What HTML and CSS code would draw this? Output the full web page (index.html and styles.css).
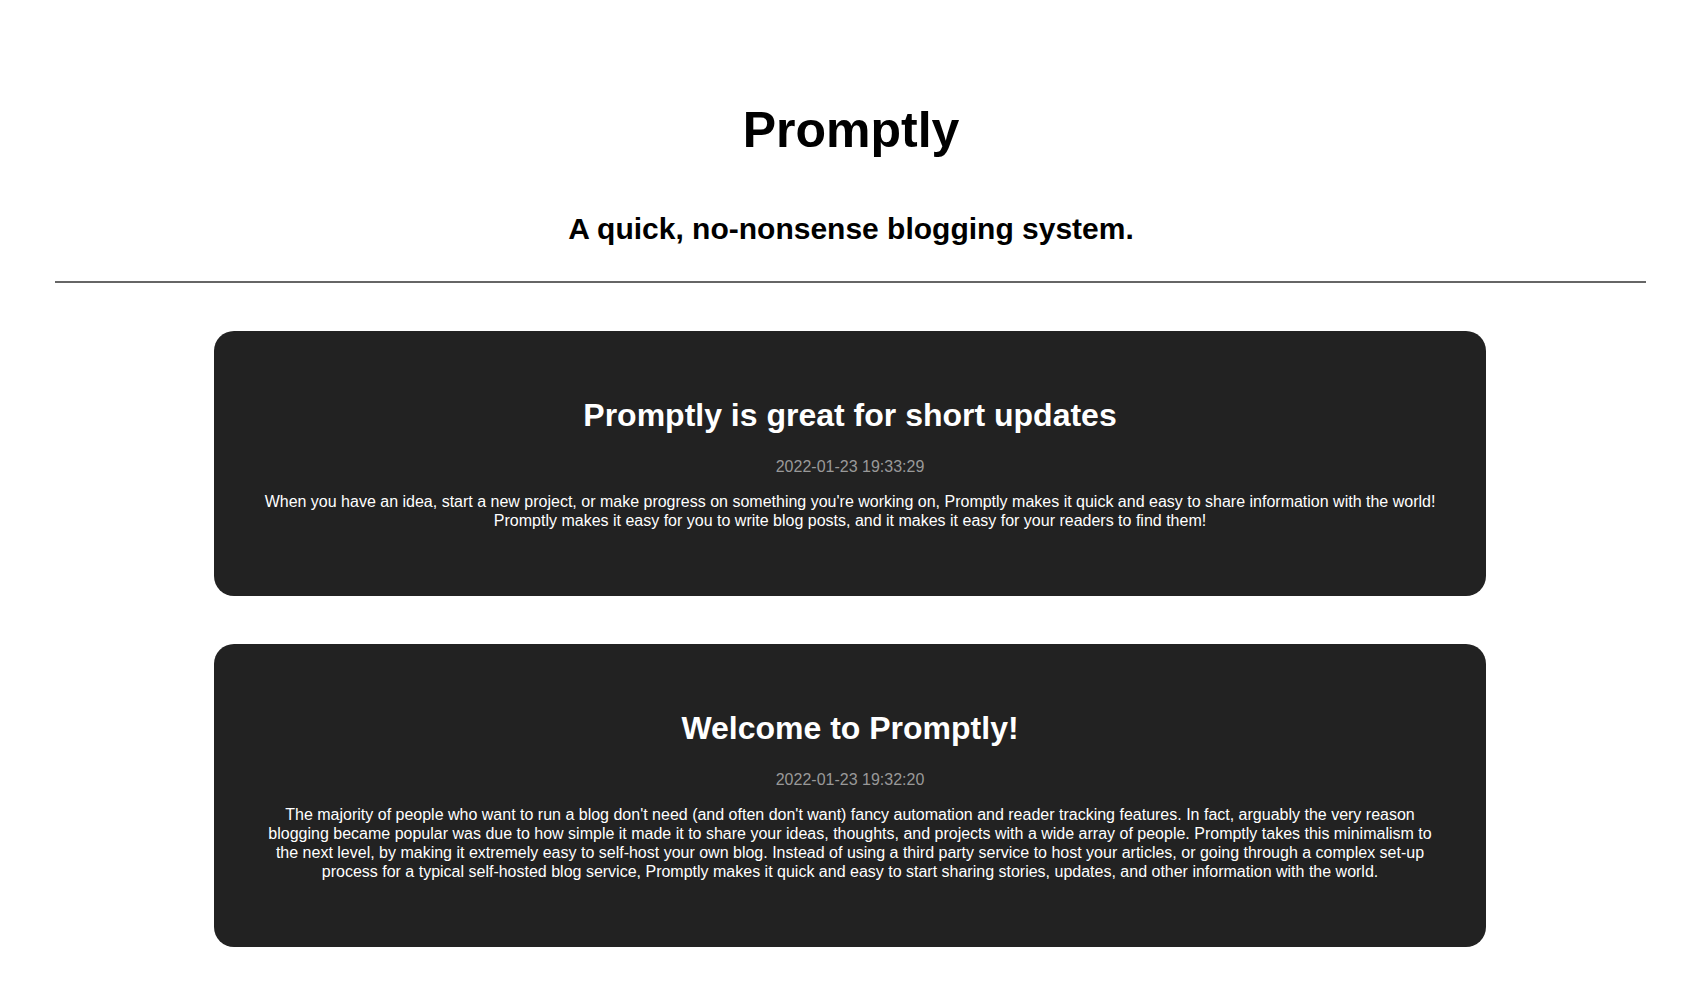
FILE: index.html
```html
<!DOCTYPE html>
<html lang="en">
<head>
<meta charset="utf-8">
<title>Promptly</title>
<link rel="stylesheet" href="styles.css">
</head>
<body>
<header class="site-header">
  <h1 class="site-title">Promptly</h1>
  <h2 class="site-tagline">A quick, no-nonsense blogging system.</h2>
</header>
<hr class="divider">
<main class="posts">
  <article class="post">
    <h2 class="post-title">Promptly is great for short updates</h2>
    <p class="post-date">2022-01-23 19:33:29</p>
    <p class="post-body">When you have an idea, start a new project, or make progress on something you're working on, Promptly makes it quick and easy to share information with the world! Promptly makes it easy for you to write blog posts, and it makes it easy for your readers to find them!</p>
  </article>
  <article class="post">
    <h2 class="post-title">Welcome to Promptly!</h2>
    <p class="post-date">2022-01-23 19:32:20</p>
    <p class="post-body">The majority of people who want to run a blog don't need (and often don't want) fancy automation and reader tracking features. In fact, arguably the very reason blogging became popular was due to how simple it made it to share your ideas, thoughts, and projects with a wide array of people. Promptly takes this minimalism to the next level, by making it extremely easy to self-host your own blog. Instead of using a third party service to host your articles, or going through a complex set-up process for a typical self-hosted blog service, Promptly makes it quick and easy to start sharing stories, updates, and other information with the world.</p>
  </article>
</main>
</body>
</html>
```

FILE: styles.css
```css
html, body {
  margin: 0;
  padding: 0;
  background: #fff;
}

body {
  font-family: "Liberation Sans", Arial, sans-serif;
  color: #000;
}

.site-header {
  text-align: center;
  padding-top: 102px;
}

.site-title {
  margin: 0;
  font-size: 50px;
  line-height: 56px;
  font-weight: bold;
}

.site-tagline {
  margin: 54px 0 0;
  font-size: 30px;
  line-height: 34px;
  font-weight: bold;
}

.divider {
  margin: 35px 56px 0 55px;
  border: 0;
  border-top: 2px solid #666;
  height: 0;
}

.posts {
  display: flex;
  flex-direction: column;
  align-items: center;
  gap: 48px;
  padding: 48px 2px 40px 0;
}

.post {
  width: 1272px;
  box-sizing: border-box;
  background: #222;
  color: #fff;
  border-radius: 20px;
  padding: 66px 48px 66px;
  text-align: center;
}

.post-title {
  margin: 0;
  font-size: 32px;
  line-height: 37px;
  font-weight: bold;
}

.post-date {
  margin: 24px 0 0;
  color: #999;
  font-size: 16px;
  line-height: 18px;
}

.post-body {
  margin: 16px 0 0;
  font-size: 16px;
  line-height: 19px;
  color: #fff;
}
```
